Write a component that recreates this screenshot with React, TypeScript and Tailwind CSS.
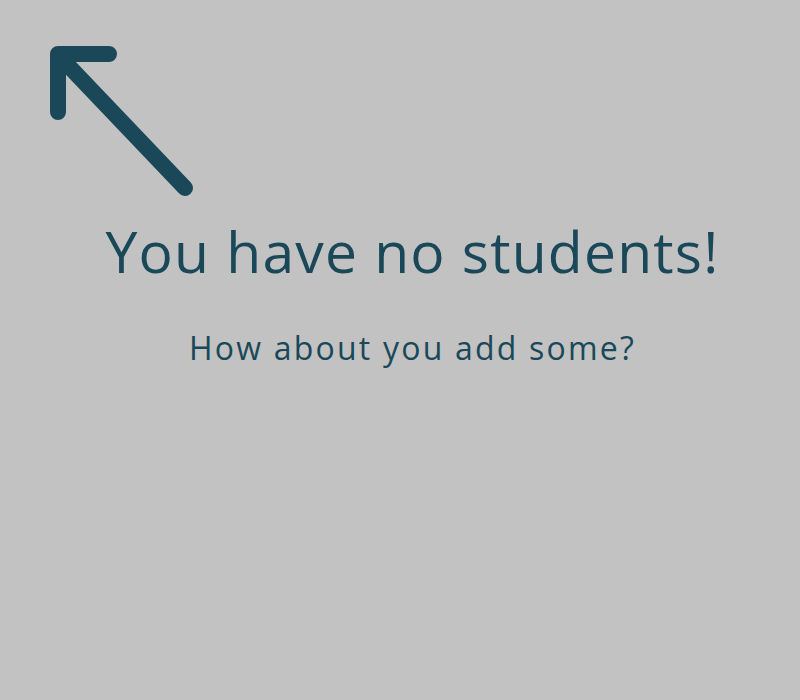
export default function App() {
  return (
    <div className="min-h-[700px] w-full bg-[#c2c2c2] text-[#1a4858] font-['Open_Sans',sans-serif]">
      <div className="px-[50px] pt-[46px]">
        <svg width="145" height="150" viewBox="0 0 145 150" fill="none" stroke="currentColor" strokeWidth="16" strokeLinecap="round" strokeLinejoin="round">
          <path d="M8 66 V8 H59" />
          <path d="M12 13 L135 142" />
        </svg>
      </div>
      <div className="flex flex-col items-center pl-[25px] pt-[20px]">
        <h1 className="text-[57px] leading-[70px] tracking-[1.2px]">You have no students!</h1>
        <p className="mt-[42px] text-[32px] leading-[40px] tracking-[2.2px] font-medium">How about you add some?</p>
      </div>
    </div>
  );
}
